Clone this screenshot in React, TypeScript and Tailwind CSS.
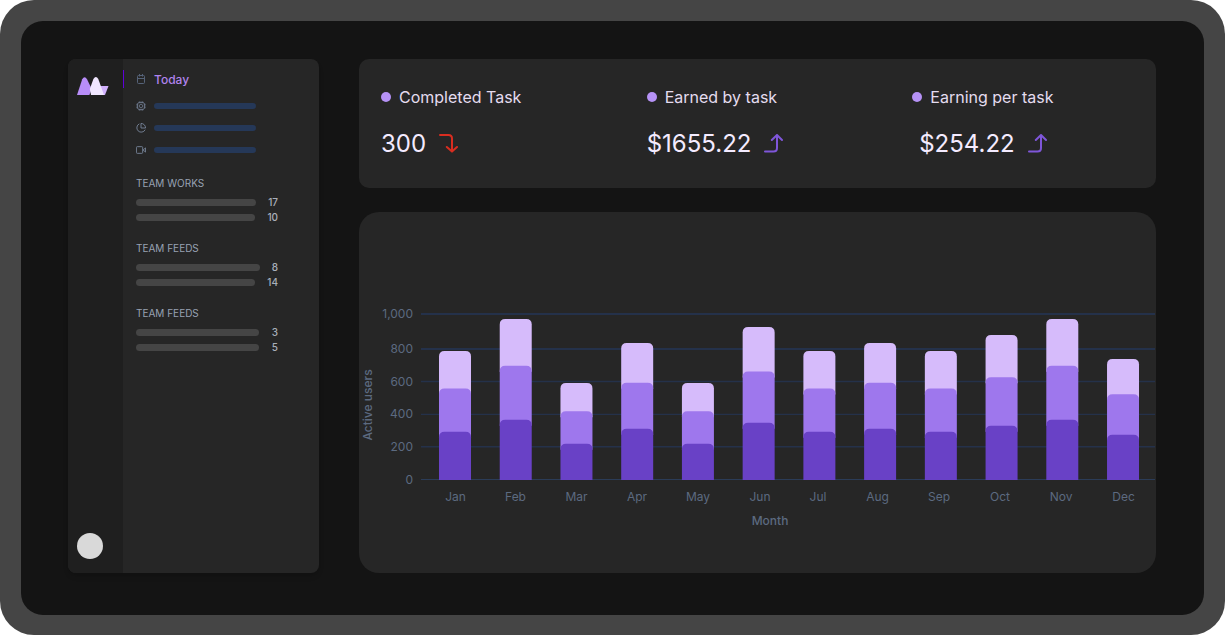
import React from "react";

const MONTHS = [
  { name: "Jan", total: 129, labelX: 96.5 },
  { name: "Feb", total: 161, labelX: 156.5 },
  { name: "Mar", total: 97, labelX: 217.5 },
  { name: "Apr", total: 137, labelX: 278 },
  { name: "May", total: 97, labelX: 339 },
  { name: "Jun", total: 153, labelX: 401 },
  { name: "Jul", total: 129, labelX: 459 },
  { name: "Aug", total: 137, labelX: 518.5 },
  { name: "Sep", total: 129, labelX: 580 },
  { name: "Oct", total: 145, labelX: 641 },
  { name: "Nov", total: 161, labelX: 702 },
  { name: "Dec", total: 121, labelX: 764.5 },
];

const TICKS = [
  { label: "1,000", y: 102, width: 2 },
  { label: "800", y: 137, width: 2 },
  { label: "600", y: 169.5, width: 1.4 },
  { label: "400", y: 202.4, width: 1.4 },
  { label: "200", y: 234.8, width: 1.6 },
  { label: "0", y: 267.5, width: 1 },
];

const BASE = 268;

// One layer of a stacked bar; it runs just far enough below the next
// layer's rounded top to fill its corners.
function layerPath(x: number, height: number, nextHeight: number) {
  const top = BASE - height;
  const bottom = nextHeight > 0 ? BASE - nextHeight + 6 : BASE;
  return `M${x} ${bottom}V${top + 5.5}Q${x} ${top} ${x + 5.5} ${top}H${x + 26.5}Q${x + 32} ${top} ${x + 32} ${top + 5.5}V${bottom}Z`;
}

function ActiveUsersChart() {
  return (
    <svg
      viewBox="0 0 797 361"
      className="block h-auto w-full font-['Inter',sans-serif] text-[12px]"
      role="img"
      aria-label="Active users by month"
    >
      {TICKS.map((t) => (
        <g key={t.label}>
          <line x1="62" x2="796" y1={t.y} y2={t.y} stroke={t.label === "0" ? "#2b3c58" : "#24314a"} strokeWidth={t.width} />
          <text x="54" y={Math.round(t.y) + 4} textAnchor="end" fill="#5c6a80">
            {t.label}
          </text>
        </g>
      ))}
      {MONTHS.map((m, i) => {
        const x = 80 + i * 60.73;
        const middle = m.total * 0.709;
        const low = m.total * 0.375;
        return (
          <g key={m.name}>
            <path d={layerPath(x, m.total, middle)} fill="#d6bbfb" />
            <path d={layerPath(x, middle, low)} fill="#9e77ed" />
            <path d={layerPath(x, low, 0)} fill="#6941c6" />
            <text x={m.labelX} y="289" textAnchor="middle" fill="#5c6a80">
              {m.name}
            </text>
          </g>
        );
      })}
      <text x="411" y="313" textAnchor="middle" fill="#5c6a80" fontWeight="500">
        Month
      </text>
      <text transform="translate(13 193) rotate(-90)" textAnchor="middle" fill="#5c6a80" fontWeight="500">
        Active users
      </text>
    </svg>
  );
}

function Logo() {
  return (
    <svg viewBox="0 0 32 18" className="block h-[18px] w-8" aria-hidden="true">
      <path d="M18 9H31.5L28 18H18Z" fill="#d0b0fc" />
      <path d="M0 18L5.2 2.2Q7.6-1.8 10 2.2L13.8 10V14L12.4 18Z" fill="#b88df8" />
      <path d="M14 18L12.8 12L16.4 2Q18.9-1.8 21.3 2L27 18Z" fill="#f0e6ff" />
    </svg>
  );
}

function CalendarIcon() {
  return (
    <svg viewBox="0 0 10 10" className="size-[10px]" fill="none" stroke="#566379" aria-hidden="true">
      <rect x="1.5" y="1.5" width="7" height="8" rx="1" />
      <path d="M1.5 4.5H8.5M3.5 0V2.5M6.5 0V2.5" />
    </svg>
  );
}

function ChipIcon() {
  return (
    <svg viewBox="0 0 24 24" className="size-[10px]" fill="none" stroke="#77849a" strokeWidth="2" aria-hidden="true">
      <rect x="4" y="4" width="16" height="16" rx="3" />
      <rect x="8.5" y="8.5" width="7" height="7" rx="2" />
      <path d="M8 1v3M12 1v3M16 1v3M8 20v3M12 20v3M16 20v3M1 8h3M1 12h3M1 16h3M20 8h3M20 12h3M20 16h3" />
    </svg>
  );
}

function PieIcon() {
  return (
    <svg viewBox="0 0 24 24" className="size-[10px]" fill="none" stroke="#77849a" strokeWidth="2.2" strokeLinejoin="round" aria-hidden="true">
      <path d="M8 2a10.5 10.5 0 1 0 14 14" />
      <path d="M12 1a11 11 0 0 1 11 11H12Z" />
    </svg>
  );
}

function CameraIcon() {
  return (
    <svg viewBox="0 0 24 24" className="size-[10px]" fill="none" stroke="#77849a" strokeWidth="2.2" strokeLinejoin="round" aria-hidden="true">
      <rect x="1" y="4" width="15" height="16" rx="2" />
      <path d="M17 12l6-5v10Z" />
    </svg>
  );
}

function Trend({ down = false }: { down?: boolean }) {
  return down ? (
    <svg viewBox="0 0 20 20" className="size-5" fill="none" stroke="#d92d20" strokeWidth="2" strokeLinecap="round" strokeLinejoin="round" aria-label="down">
      <path d="M2 1H10.5Q14 1 14 4.5V17M8.8 13L14 17.6L19 13" />
    </svg>
  ) : (
    <svg viewBox="0 0 20 20" className="size-5" fill="none" stroke="#7f56d9" strokeWidth="2" strokeLinecap="round" strokeLinejoin="round" aria-label="up">
      <path d="M2 17.5H10.5Q14 17.5 14 14V1.5M8.8 6L14 1L19 6" />
    </svg>
  );
}

const STATS = [
  { label: "Completed Task", value: "300", down: true, align: "items-start" },
  { label: "Earned by task", value: "$1655.22", down: false, align: "items-start" },
  { label: "Earning per task", value: "$254.22", down: false, align: "items-center" },
];

const GROUPS = [
  { title: "TEAM WORKS", rows: [{ bar: "w-[120px]", n: 17 }, { bar: "w-[119px]", n: 10 }] },
  { title: "TEAM FEEDS", rows: [{ bar: "w-[124px]", n: 8 }, { bar: "w-[119px]", n: 14 }] },
  { title: "TEAM FEEDS", rows: [{ bar: "w-[123px]", n: 3 }, { bar: "w-[123px]", n: 5 }] },
];

function Sidebar() {
  return (
    <aside className="flex w-[251px] shrink-0 overflow-hidden rounded-lg bg-[#262626] shadow-md">
      <div className="flex w-[55px] flex-col justify-between bg-[#1f1f1f] px-[9px] pt-[18px] pb-[14px]">
        <Logo />
        <div className="size-[26px] rounded-full bg-[#d9d9d9]" />
      </div>
      <div className="flex-1">
        <nav className="pt-[11px]">
          <a href="#today" className="flex h-[18px] items-center gap-2 border-l border-[#5f00db] pl-3 text-[12px] leading-[18px] font-medium text-[#b083ee]">
            <CalendarIcon />
            <span className="pt-px">Today</span>
          </a>
          <ul className="mt-[7px] pl-[13px]">
            {[ChipIcon, PieIcon, CameraIcon].map((Icon, i) => (
              <li key={i} className="flex h-[22px] items-center gap-2">
                <Icon />
                <span className="h-[6px] w-[102px] rounded-full bg-[#253858]" />
              </li>
            ))}
          </ul>
        </nav>
        <div className="flex flex-col gap-5 pt-[15px] pl-[13px]">
          {GROUPS.map((g, i) => (
            <section key={i}>
              <h2 className="text-[10px] leading-[15px] text-[#98a2b3]">{g.title}</h2>
              <ul className="-mb-1 pt-1">
                {g.rows.map((r) => (
                  <li key={r.n} className="flex h-[15px] w-[142px] items-center justify-between text-[10px] font-medium text-[#a9afba]">
                    <span className={"h-[7px] rounded-full bg-[#454545] " + r.bar} />
                    {r.n}
                  </li>
                ))}
              </ul>
            </section>
          ))}
        </div>
      </div>
    </aside>
  );
}

export default function App() {
  return (
    <div className="bg-white font-['Inter',sans-serif]">
      <div className="rounded-[34px] bg-[#454545] px-[21px] pt-[21px] pb-5">
        <div className="flex gap-10 rounded-[22px] bg-[#141414] pt-[38px] pr-12 pb-[42px] pl-[47px]">
          <Sidebar />
          <main className="flex min-w-0 flex-1 flex-col gap-6">
            <section className="grid h-[129px] grid-cols-3 rounded-[10px] bg-[#262626]">
              {STATS.map((s) => (
                <div key={s.label} className="flex pt-[26px] pl-[22px]">
                  <div className={"flex flex-col gap-[17px] " + s.align}>
                    <h2 className="flex items-center gap-2 text-[16px] leading-6 text-[#e4dcef]">
                      <span className="size-[10px] rounded-full bg-[#b692f6]" />
                      {s.label}
                    </h2>
                    <p className="flex items-center gap-3 text-[24px] leading-9 text-[#f4ebff]">
                      {s.value}
                      <Trend down={s.down} />
                    </p>
                  </div>
                </div>
              ))}
            </section>
            <section className="overflow-hidden rounded-[20px] bg-[#262626]">
              <ActiveUsersChart />
            </section>
          </main>
        </div>
      </div>
    </div>
  );
}
